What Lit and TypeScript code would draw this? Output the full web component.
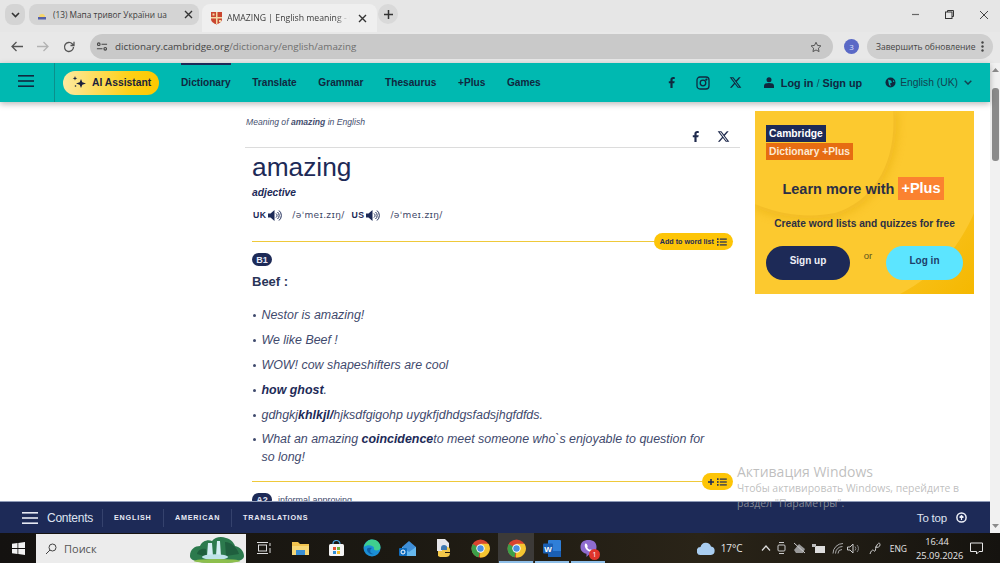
import { LitElement, html, css } from "lit";
import { customElement } from "lit/decorators.js";

const xLogo = (s: number, c = "#1f2a4d") => html`<svg width=${s} height=${s} viewBox="0 0 24 24" fill=${c}><path d="M18.244 2.25h3.308l-7.227 8.26 8.502 11.24H16.17l-5.214-6.817L4.99 21.75H1.68l7.73-8.835L1.254 2.25H8.08l4.713 6.231zm-1.161 17.52h1.833L7.084 4.126H5.117z"/></svg>`;
const fLogo = (s: number, c = "#1f2a4d") => html`<svg width=${s} height=${s} viewBox="0 0 24 24" fill=${c}><path d="M14 13.5h3l1-4h-4v-2c0-1.03 0-2 2-2h2V2.14C17.67 2.1 16.3 2 15 2c-2.7 0-5 1.66-5 4.7v2.8H7v4h3V22h4z"/></svg>`;
const listIcon = html`<svg width="10" height="8" viewBox="0 0 10 8" fill="#1d2a57"><rect x="0" y="0.3" width="1.600" height="1.600"/><rect x="0" y="3.200" width="1.600" height="1.600"/><rect x="0" y="6.100" width="1.600" height="1.600"/><rect x="2.800" y="0.500" width="7" height="1.200"/><rect x="2.800" y="3.400" width="7" height="1.200"/><rect x="2.800" y="6.300" width="7" height="1.200"/></svg>`;
const speaker = html`<svg width="15" height="13" viewBox="0 0 15 13" fill="none" stroke="#1d2a57"><path d="M0 4.500h2.500L6.500 1v11L2.500 8.500H0z" fill="#1d2a57" stroke="none"/><path d="M8 4.500a2.500 2.500 0 0 1 0 4M9.500 3a4.500 4.500 0 0 1 0 7M11 1.500a6.500 6.500 0 0 1 0 10" stroke-width="1"/></svg>`;
const burger = (c: string) => html`<svg width="16" height="12" viewBox="0 0 16 12" fill=${c}><rect width="16" height="1.600" y="0"/><rect width="16" height="1.600" y="5.200"/><rect width="16" height="1.600" y="10.400"/></svg>`;
const chrome = html`<svg width="19" height="19" viewBox="0 0 20 20"><circle cx="10" cy="10" r="9.500" fill="#d9442f"/><path d="M10 10 1.800 5.200A9.500 9.500 0 0 0 8 19.300z" fill="#3c9f49"/><path d="M10 5h8.400a9.500 9.500 0 0 1-9 14.500z" fill="#f4c531"/><circle cx="10" cy="10" r="4.400" fill="#fff"/><circle cx="10" cy="10" r="3.400" fill="#4a8fe0"/></svg>`;

@customElement("app-root")
export class AppRoot extends LitElement {
  static styles = css`
    :host { display: flex; flex-direction: column; width: 1000px; height: 563px; overflow: hidden; position: relative; font-family: "Liberation Sans", Arial, sans-serif; color: #1d2a57; background: #fff; }
    svg { display: block; flex: none; }

    .tabs { height: 32px; flex: none; background: #e6e6e6; display: flex; align-items: flex-start; padding-top: 4px; box-sizing: border-box; font-family: "Open Sans", sans-serif; color: #3c3c3c; }
    .drop { width: 20px; height: 21px; margin-left: 5px; border-radius: 8px; background: #d4d4d4; display: flex; align-items: center; justify-content: center; }
    .tab { height: 21px; display: flex; align-items: center; box-sizing: border-box; font-size: 8.300px; white-space: nowrap; border-radius: 8px; }
    .tab.t1 { width: 170px; margin-left: 4px; background: #d4d4d4; padding-left: 7px; }
    .tab.t2 { width: 175px; margin-left: 3px; background: #efefef; padding-left: 8px; height: 28px; border-radius: 8px 8px 0 0; font-size: 8.700px; }
    .tab .lbl { margin-left: 5px; width: 118px; overflow: hidden; flex: none; }
    .tab.t2 .lbl { margin-left: 4px; width: 123px; -webkit-mask-image: linear-gradient(90deg,#000 88%,transparent); mask-image: linear-gradient(90deg,#000 88%,transparent); }
    .tab .x { margin-left: 13px; }
    .tab.t2 .x { margin-left: 8px; }
    .plus { width: 20px; height: 20px; border-radius: 50%; margin-left: 1px; background: #d9d9d9; display: flex; align-items: center; justify-content: center; }
    .win { margin-left: auto; display: flex; align-items: center; height: 21px; padding-right: 11px; gap: 25px; }

    .tool { height: 31px; flex: none; background: #e8e8e8; display: flex; align-items: center; padding-bottom: 2px; box-sizing: border-box; font-family: "Open Sans", sans-serif; }
    .nav { display: flex; align-items: center; padding-left: 11px; gap: 14px; width: 90px; box-sizing: border-box; }
    .omni { width: 743px; height: 25px; background: #c9c9c9; border-radius: 13px; display: flex; align-items: center; box-sizing: border-box; padding-left: 6px; padding-right: 11px; font-size: 9.800px; color: #444; }
    .omni .url { margin-left: 7px; white-space: nowrap; }
    .omni .url span { color: #6e6e6e; }
    .omni svg:last-child { margin-left: auto; }
    .prof { width: 15px; height: 15px; border-radius: 50%; background: #5a69c6; color: #dfe3ff; font-size: 8px; display: flex; align-items: center; justify-content: center; margin-left: 11px; }
    .upd { width: 126px; height: 25px; margin-left: 8px; background: #cfcfcf; border-radius: 13px; display: flex; align-items: center; padding-left: 9px; box-sizing: border-box; font-size: 8.500px; color: #444; white-space: nowrap; gap: 6px; }

    .page { flex: 1; min-height: 0; display: flex; }
    .view { flex: 1; min-width: 0; display: flex; flex-direction: column; }
    .sb { width: 10px; flex: none; background: #f1f1f1; display: flex; flex-direction: column; align-items: center; padding-top: 5px; box-sizing: border-box; }
    .thumb { width: 7px; height: 73px; border-radius: 3px; background: #8b8b8b; margin-top: 16px; }
    .sb .dn { margin-top: auto; margin-bottom: 5px; }

    .hdr { height: 39px; flex: none; background: #00b9b1; display: flex; align-items: center; box-shadow: 0 2px 6px rgba(0,0,0,.28); position: relative; z-index: 1; color: #10283f; font-weight: 700; font-size: 10.150px; white-space: nowrap; }
    .hb { width: 55px; height: 100%; box-sizing: border-box; border-right: 1px solid #0b8f8c; display: flex; align-items: center; padding-left: 18px; flex: none; padding-bottom: 3px; }
    .ai { margin-left: 8px; width: 96px; height: 24px; border-radius: 12px; background: linear-gradient(90deg,#fde9a0,#fdd016 70%,#fdc800); display: flex; align-items: center; padding-left: 9px; box-sizing: border-box; gap: 5px; font-size: 10.300px; color: #1a1f3c; flex: none; }
    .menu { display: flex; align-items: center; height: 100%; margin-left: 22px; }
    .menu a { display: flex; align-items: center; height: 100%; box-sizing: border-box; margin-right: 21.700px; border-top: 2px solid transparent; border-bottom: 2px solid transparent; }
    .menu a.on { border-top-color: #1d2a57; }
    .hsoc { display: flex; align-items: center; margin-left: auto; }
    .hsoc .ig { margin-left: 18px; }
    .hsoc .xl { margin-left: 19px; }
    .hsoc .us { margin-left: 22px; }
    .hsoc .gl { margin-left: 23px; }
    .hsoc .ch { margin: 0 18px 0 6px; }
    .login { font-size: 10.850px; color: #10283f; margin-left: 7px; }
    .login span { font-weight: 400; opacity: .7; }
    .lang { font-weight: 400; font-size: 10.300px; color: #13414f; margin-left: 4px; }

    .scroll { flex: 1; min-height: 0; overflow: hidden; display: flex; padding-left: 245px; }
    .main { width: 495px; flex: none; }
    .crumb { font-size: 8.600px; font-style: italic; color: #46506f; margin: 15px 0 0 1px; line-height: 10px; white-space: nowrap; }
    .share { display: flex; justify-content: flex-end; gap: 15px; padding-right: 10px; height: 16px; margin-top: 1px; align-items: center; }
    .hr { height: 1px; background: #dcdcdc; margin-top: 3px; }
    .entry { padding-left: 7px; width: 481px; }
    h1 { margin: 2px 0 0; font-weight: 400; font-size: 26.300px; line-height: 34px; color: #1d2a57; }
    .pos { font-size: 10.300px; font-weight: 700; font-style: italic; line-height: 12px; margin-top: 3px; color: #1d2a57; }
    .pron { display: flex; align-items: center; height: 14px; margin-top: 9px; font-size: 10px; color: #3d4666; white-space: nowrap; }
    .pron b { font-size: 8.700px; letter-spacing: .4px; margin-left: 1px; margin-right: 2px; color: #1d2a57; }
    .pron .ipa { margin: 0 6px 0 9px; font-family: "DejaVu Sans", sans-serif; font-size: 9px; letter-spacing: .35px; }
    .rule { display: flex; align-items: center; }
    .rule i { flex: 1; height: 1px; background: #efc93a; }
    .rule .pill { height: 17px; border-radius: 9px; background: #fdc507; display: flex; align-items: center; font-size: 7.200px; font-weight: 700; color: #1d2a57; padding: 0 6px; gap: 3px; box-sizing: border-box; white-space: nowrap; }
    .r1 { margin-top: 11px; }
    .lvl { width: 20px; height: 13px; border-radius: 7px; background: #1d2a57; color: #e5e8f5; font-size: 9px; font-weight: 700; display: flex; align-items: center; justify-content: center; flex: none; }
    .r1lvl { margin-top: 3px; }
    h2 { margin: 8px 0 0; font-size: 13px; font-weight: 700; line-height: 16px; color: #2a3558; }
    ul { list-style: none; margin: 16px 0 0; padding: 0; width: 458px; font-size: 12.420px; font-style: italic; color: #3f4a6d; }
    li { position: relative; padding-left: 9.500px; line-height: 18px; margin-bottom: 6.900px; }
    li::before { content: ""; position: absolute; left: 1px; top: 8px; width: 3px; height: 3px; border-radius: 50%; background: #3f4a6d; }
    li b { color: #1d2a57; }
    .r2 { margin-top: 6px; }
    .a2 { display: flex; align-items: center; margin-top: 3px; font-size: 9px; color: #3f4a6d; gap: 6px; }

    .ad { width: 219px; height: 183px; margin: 9px 0 0 15px; flex: none; background: #fcc92f; position: relative; overflow: hidden; display: flex; flex-direction: column; box-sizing: border-box; padding: 14px 11px 0; }
    .ad > svg.bg { position: absolute; inset: 0; }
    .ad > *:not(.bg) { position: relative; }
    .brand { display: flex; flex-direction: column; align-items: flex-start; font-size: 10.300px; font-weight: 700; color: #fff; line-height: 17px; gap: 1px; }
    .brand span { padding: 0 3px; height: 17px; }
    .brand .a { background: #1d2a57; }
    .brand .b { background: #e66c12; color: #fde9d2; }
    .lm { display: flex; align-items: center; justify-content: center; gap: 4px; margin-top: 17px; font-size: 14.500px; font-weight: 700; color: #2b2f45; height: 23px; padding-right: 3px; white-space: nowrap; }
    .lm span { background: #fb8230; color: #fff; height: 23px; line-height: 23px; padding: 0 3px; }
    .cw { font-size: 10.200px; font-weight: 700; text-align: center; margin-top: 17px; line-height: 14px; color: #2b2f45; white-space: nowrap; }
    .btns { display: flex; margin-top: 15px; align-items: flex-start; }
    .btn { height: 34px; border-radius: 17px; display: flex; align-items: center; justify-content: center; font-size: 10px; font-weight: 700; padding-bottom: 5px; box-sizing: border-box; }
    .su { width: 84px; background: #1d2a57; color: #eef0f8; }
    .or { width: 36px; text-align: center; font-size: 9.500px; color: #5b5220; line-height: 20px; }
    .li { width: 77px; background: #5ce5ff; color: #1d3f6a; }

    .bot { height: 32px; flex: none; background: #1d2a57; border-top: 1px solid #8f9bb8; box-sizing: border-box; display: flex; align-items: center; color: #dfe4f2; white-space: nowrap; position: relative; z-index: 1; }
    .bot .h { margin-left: 22px; }
    .bot .c { font-size: 12px; margin-left: 9px; letter-spacing: -.25px; width: 55px; box-sizing: border-box; }
    .bot .sec { font-size: 7.200px; font-weight: 700; letter-spacing: .8px; border-left: 1px solid #35426d; height: 18px; display: flex; align-items: center; padding-left: 11px; box-sizing: border-box; color: #e8ebf5; }
    .bot .s1 { width: 61px; }
    .bot .s2 { width: 68px; }
    .totop { margin-left: auto; margin-right: 23px; display: flex; align-items: center; gap: 9px; font-size: 11.500px; letter-spacing: -.2px; }

    .task { height: 30px; flex: none; background: linear-gradient(90deg,#141210,#1c1912 40%,#2a2418 70%,#15130f); display: flex; align-items: center; color: #e6e6e6; font-family: "Open Sans", sans-serif; position: relative; }
    .start { width: 36px; display: flex; justify-content: center; flex: none; }
    .search { width: 210px; height: 29px; margin-top: 1px; background: #ececec; display: flex; align-items: center; padding-left: 9px; box-sizing: border-box; font-size: 11px; color: #555; gap: 7px; flex: none; overflow: hidden; }
    .search svg:last-child { margin-left: auto; margin-right: 1px; }
    .icons { display: flex; height: 100%; }
    .ic { width: 36px; height: 100%; display: flex; align-items: center; justify-content: center; box-sizing: border-box; position: relative; }
    .ic.run::after { content: ""; position: absolute; left: 1px; right: 1px; bottom: 0; height: 2px; background: #8fbfe8; }
    .ic.act { background: #3c3a38; }
    .badge { position: absolute; left: 19px; top: 16px; width: 11px; height: 11px; border-radius: 50%; background: #e0352b; color: #fff; font-size: 7px; line-height: 11px; text-align: center; }
    .tray { margin-left: auto; display: flex; align-items: center; height: 100%; padding-right: 17px; gap: 6.500px; }
    .tmp { font-size: 10px; margin-left: -0.500px; margin-right: 11.500px; }
    .tray .tight { margin-left: -3.500px; }
    .tray .wide { margin-left: 3.500px; }
    .eng { font-size: 8.500px; margin: 0 2.500px; }
    .clock { font-size: 9.300px; text-align: center; line-height: 14px; margin-right: 5.500px; width: 42px; white-space: nowrap; padding-top: 1px; }

    .wm { position: absolute; left: 737px; top: 463px; z-index: 5; color: rgba(170,170,170,.75); pointer-events: none; white-space: nowrap; font-family: "Open Sans", sans-serif; }
    .wm .a { font-size: 14px; line-height: 17px; }
    .wm .b { font-size: 10.450px; line-height: 15px; margin-top: 1px; }
  `;

  render() {
    const gx = (d = "#444") => html`<svg width="9" height="9" viewBox="0 0 9 9" stroke=${d} stroke-width="1.400"><path d="M1 1l7 7M8 1L1 8"/></svg>`;
    return html`
      <div class="tabs">
        <div class="drop"><svg width="9" height="6" viewBox="0 0 9 6" fill="none" stroke="#333" stroke-width="1.600"><path d="M1 1l3.500 3.500L8 1"/></svg></div>
        <div class="tab t1">
          <svg width="12" height="12" viewBox="0 0 12 12"><path d="M3 8a3 3 0 0 1 6 0z" fill="#f6d66a"/><rect x="2" y="8" width="8" height="2.500" fill="#5560a8"/></svg>
          <span class="lbl">(13) Мапа тривог України ua</span>
          <span class="x">${gx("#333")}</span>
        </div>
        <div class="tab t2">
          <svg width="13" height="14" viewBox="0 0 13 14"><path d="M1 1h11v7c0 3-3 4.500-5.500 5.500C4 12.500 1 11 1 8z" fill="#c9452f"/><path d="M6 1h1.500v12H6zM1 6h11v1.500H1z" fill="#f3d9a8"/><rect x="2.500" y="2.500" width="2" height="2" fill="#f3d9a8"/><rect x="9" y="9" width="2" height="2" fill="#f3d9a8"/></svg>
          <span class="lbl">AMAZING | English meaning - Cambridge</span>
          <span class="x">${gx("#333")}</span>
        </div>
        <div class="plus"><svg width="9" height="9" viewBox="0 0 9 9" stroke="#333" stroke-width="1.500"><path d="M4.500 0v9M0 4.500h9"/></svg></div>
        <div class="win">
          <svg width="9" height="9" viewBox="0 0 9 9" stroke="#666" stroke-width="1.200"><path d="M1 4.500h7"/></svg>
          <svg width="9" height="9" viewBox="0 0 9 9" fill="none" stroke="#333" stroke-width="1"><rect x=".5" y="2" width="6.500" height="6.500"/><path d="M2.500 2V.5h6v6H7"/></svg>
          <svg width="10" height="10" viewBox="0 0 10 10" stroke="#444" stroke-width="1"><path d="M1 1l8 8M9 1l-8 8"/></svg>
        </div>
      </div>

      <div class="tool">
        <div class="nav">
          <svg width="12" height="11" viewBox="0 0 12 11" fill="none" stroke="#555" stroke-width="1.300"><path d="M12 5.500H1.500M5.500 1l-4.500 4.500 4.500 4.500"/></svg>
          <svg width="12" height="11" viewBox="0 0 12 11" fill="none" stroke="#b2b2b2" stroke-width="1.300"><path d="M0 5.500h10.500M6.500 1l4.500 4.500-4.500 4.500"/></svg>
          <svg width="12" height="12" viewBox="0 0 12 12" fill="none" stroke="#555" stroke-width="1.300"><path d="M10.500 6a4.500 4.500 0 1 1-1.300-3.200L11 4.500M11 .8v3.700H7.500"/></svg>
        </div>
        <div class="omni">
          <svg width="12" height="11" viewBox="0 0 13 11" fill="none" stroke="#444" stroke-width="1.200"><circle cx="3" cy="3" r="1.400"/><path d="M6 3h6M1 8h6"/><circle cx="10" cy="8" r="1.400"/></svg>
          <span class="url">dictionary.cambridge.org<span>/dictionary/english/amazing</span></span>
          <svg width="12" height="12" viewBox="0 0 24 24" fill="none" stroke="#555" stroke-width="2"><path d="M12 2.500l3 6.300 6.800.9-5 4.700 1.300 6.800-6.100-3.300-6.100 3.300 1.300-6.800-5-4.700 6.800-.9z"/></svg>
        </div>
        <div class="prof">3</div>
        <div class="upd">Завершить обновление
          <svg width="3" height="11" viewBox="0 0 3 11" fill="#444"><circle cx="1.500" cy="1.500" r="1.200"/><circle cx="1.500" cy="5.500" r="1.200"/><circle cx="1.500" cy="9.500" r="1.200"/></svg>
        </div>
      </div>

      <div class="page">
        <div class="view">
          <div class="hdr">
            <div class="hb">${burger("#10283f")}</div>
            <div class="ai">
              <svg width="15" height="13" viewBox="0 0 15 13" fill="#1a1f3c"><path d="M9 3l1.300 3.200L14 7.500l-3.700 1.300L9 12 7.700 8.800 4 7.500l3.700-1.300z"/><path d="M3 0l.6 1.700 1.700.6-1.700.6L3 4.600l-.6-1.700L.7 2.300l1.700-.6z"/><circle cx="3.500" cy="10" r=".8"/></svg>
              AI Assistant
            </div>
            <div class="menu">
              <a class="on">Dictionary</a><a>Translate</a><a>Grammar</a><a>Thesaurus</a><a>+Plus</a><a>Games</a>
            </div>
            <div class="hsoc">
              ${fLogo(13, "#10283f")}
              <svg class="ig" width="14" height="14" viewBox="0 0 14 14" fill="none" stroke="#10283f" stroke-width="1.300"><rect x="1" y="1" width="12" height="12" rx="3"/><circle cx="7" cy="7" r="2.800"/><circle cx="10.400" cy="3.600" r=".5" fill="#10283f"/></svg>
              <span class="xl">${xLogo(13, "#10283f")}</span>
              <svg class="us" width="10" height="11" viewBox="0 0 10 11" fill="#10283f"><circle cx="5" cy="2.800" r="2.500"/><path d="M0 11V8.500C0 6.800 2 6 5 6s5 .8 5 2.500V11z"/></svg>
              <span class="login">Log in <span>/</span> Sign up</span>
              <svg class="gl" width="11" height="11" viewBox="0 0 11 11"><circle cx="5.500" cy="5.500" r="5" fill="#10283f"/><path d="M3 2.500l3 1 1 2-2 1 1 3-2-1.500zM8 3l1.500 1.500L8 5z" fill="#00b9b1"/></svg>
              <span class="lang">English (UK)</span>
              <svg class="ch" width="8" height="5" viewBox="0 0 8 5" fill="none" stroke="#13414f" stroke-width="1.500"><path d="M.7.7L4 4 7.300.7"/></svg>
            </div>
          </div>

          <div class="scroll">
            <div class="main">
              <div class="crumb">Meaning of <b>amazing</b> in English</div>
              <div class="share">${fLogo(13)}${xLogo(13)}</div>
              <div class="hr"></div>
              <div class="entry">
                <h1>amazing</h1>
                <div class="pos">adjective</div>
                <div class="pron">
                  <b>UK</b>${speaker}<span class="ipa">/əˈmeɪ.zɪŋ/</span><b>US</b>${speaker}<span class="ipa">/əˈmeɪ.zɪŋ/</span>
                </div>
                <div class="rule r1"><i></i><div class="pill">Add to word list ${listIcon}</div></div>
                <div class="lvl r1lvl">B1</div>
                <h2>Beef :</h2>
                <ul>
                  <li>Nestor is amazing!</li>
                  <li>We like Beef !</li>
                  <li>WOW! cow shapeshifters are cool</li>
                  <li><b>how ghost</b>.</li>
                  <li>gdhgkj<b>khlkjl/</b>hjksdfgigohp uygkfjdhdgsfadsjhgfdfds.</li>
                  <li>What an amazing <b>coincidence</b>to meet someone who\`s enjoyable to question for so long!</li>
                </ul>
                <div class="rule r2"><i></i><div class="pill"><svg width="6" height="6" viewBox="0 0 7 7" stroke="#1d2a57" stroke-width="1.800"><path d="M3.500 0v7M0 3.500h7"/></svg>${listIcon}</div></div>
                <div class="a2"><div class="lvl">A2</div>informal approving</div>
              </div>
            </div>
            <div class="ad">
              <svg class="bg" width="219" height="183" viewBox="0 0 219 183">
                <defs>
                  <linearGradient id="g2" x1="0" y1="0" x2="1" y2="1"><stop offset="0" stop-color="#fbc52a"/><stop offset="1" stop-color="#f5b800"/></linearGradient>
                  <filter id="bl" x="-20%" y="-20%" width="140%" height="140%"><feGaussianBlur stdDeviation="5"/></filter>
                  <clipPath id="out"><path d="M138 0C142 50 120 90 80 102C50 108 20 102 0 93V183H219V0z"/></clipPath>
                </defs>
                <g clip-path="url(#out)"><path d="M138 0C142 50 120 90 80 102C50 108 20 102 0 93" fill="none" stroke="#e0a510" stroke-width="7" opacity=".55" filter="url(#bl)"/></g>
                <path d="M219 102C205 135 180 165 145 183H219z" fill="url(#g2)"/>
              </svg>
              <div class="brand"><span class="a">Cambridge</span><span class="b">Dictionary +Plus</span></div>
              <div class="lm">Learn more with <span>+Plus</span></div>
              <div class="cw">Create word lists and quizzes for free</div>
              <div class="btns">
                <div class="btn su">Sign up</div>
                <div class="or">or</div>
                <div class="btn li">Log in</div>
              </div>
            </div>
          </div>

          <div class="bot">
            <span class="h">${burger("#e6e9f4")}</span>
            <span class="c">Contents</span>
            <span class="sec s1">ENGLISH</span>
            <span class="sec s2">AMERICAN</span>
            <span class="sec">TRANSLATIONS</span>
            <span class="totop">To top
              <svg width="11" height="11" viewBox="0 0 11 11" fill="none" stroke="#eef0f8" stroke-width="1.500"><circle cx="5.500" cy="5.500" r="4.600"/><path d="M3.500 5.500l2-2 2 2M5.500 3.800V8" stroke-width="1.200"/></svg>
            </span>
          </div>
        </div>
        <div class="sb">
          <svg width="7" height="4" viewBox="0 0 7 4" fill="#8b8b8b"><path d="M3.500 0L7 4H0z"/></svg>
          <div class="thumb"></div>
          <svg class="dn" width="7" height="4" viewBox="0 0 7 4" fill="#8b8b8b"><path d="M3.500 4L7 0H0z"/></svg>
        </div>
      </div>

      <div class="task">
        <div class="start"><svg width="13" height="13" viewBox="0 0 13 13" fill="#f2f2f2"><path d="M0 1.800L5.500 1v5H0zM6.300.9L13 0v6H6.300zM0 7h5.500v5L0 11.200zM6.300 7H13v6l-6.700-.9z"/></svg></div>
        <div class="search">
          <svg width="12" height="12" viewBox="0 0 12 12" fill="none" stroke="#444" stroke-width="1"><circle cx="7.500" cy="4.500" r="3.500"/><path d="M5 7L1 11"/></svg>
          Поиск
          <svg width="56" height="29" viewBox="0 0 56 29"><path d="M1 22C1 15 6 12 11 12c2-5 8-7 12-5 3-4 9-5 14-3 5 1 8 5 9 8 5 1 9 5 9 10 0 4-6 7-27 7S1 26 1 22z" fill="#2c7a4d"/><path d="M8 20c1-5 6-6 9-5l1 8zM36 8c6 0 12 5 14 12l-13 2z" fill="#1f5f3e"/><path d="M19 9h4l1 13h-6zM28 7h3l1 15h-5z" fill="#d5edf3"/><ellipse cx="26" cy="23" rx="13" ry="2.800" fill="#bfe3ea"/><ellipse cx="28" cy="27" rx="23" ry="2" fill="#8dbf4d"/></svg>
        </div>
        <div class="icons">
          <div class="ic"><svg width="14" height="12" viewBox="0 0 14 12" fill="none" stroke="#ddd"><rect x="1.500" y="3" width="8" height="6"/><path d="M0 .5h11M0 11.500h11M13 1v3M13 6v5"/></svg></div>
          <div class="ic"><svg width="17" height="15" viewBox="0 0 17 15"><path d="M0 1h6l2 2h9v11H0z" fill="#f1c34f"/><rect x="0" y="5" width="17" height="9" fill="#f7d878"/><rect x="4" y="9" width="9" height="5" fill="#3a8fd4"/></svg></div>
          <div class="ic"><svg width="17" height="17" viewBox="0 0 17 17"><path d="M5 4a3.500 3.500 0 0 1 7 0" fill="none" stroke="#4aa3df" stroke-width="1.200"/><rect x="1" y="4" width="15" height="12" rx="1.500" fill="#f4f4f4"/><rect x="5" y="7" width="3" height="3" fill="#e2502f"/><rect x="9" y="7" width="3" height="3" fill="#6cb33f"/><rect x="5" y="11" width="3" height="3" fill="#2f8fd8"/><rect x="9" y="11" width="3" height="3" fill="#f6bd2b"/></svg></div>
          <div class="ic"><svg width="18" height="18" viewBox="0 0 18 18"><circle cx="9" cy="9" r="8.500" fill="#1b8fd6"/><path d="M1 8C2 3 6 .5 9 .5c5 0 8.500 3.500 8.500 8 0 2-2 3-4 3-2.500 0-3-1.500-2.500-3C10 6 4 5 1 8z" fill="#3fcf8e"/><path d="M4 10c0 4 4 6 7 5-4 0-5-4-2-6-2-.5-5 0-5 1z" fill="#0f5fa8"/></svg></div>
          <div class="ic"><svg width="18" height="17" viewBox="0 0 18 17"><path d="M3 7l7-6 7 6v9H3z" fill="#3f8fd8"/><path d="M3 7l7 5 7-5v9H3z" fill="#66b8ee"/><rect x="0" y="8" width="8" height="8" rx="1" fill="#0f6cbd"/><circle cx="4" cy="12" r="2" fill="none" stroke="#fff"/></svg></div>
          <div class="ic"><svg width="17" height="19" viewBox="0 0 17 19"><path d="M1 0h8l4 4v8H1z" fill="#e6e6ea"/><path d="M2 17v-5h4V8h5c2 0 3 1 3 3v2H9v1h5c0 3-2 4-4 4H4z" fill="#f3c84a"/><path d="M5 9c0-2 1-3 3-3s3 1 3 2v3H5z" fill="#3f78b0"/></svg></div>
          <div class="ic">${chrome}</div>
          <div class="ic act run">${chrome}</div>
          <div class="ic run"><svg width="18" height="17" viewBox="0 0 18 17"><rect x="5" y="0" width="13" height="17" rx="1" fill="#2f7fd8"/><rect x="5" y="11" width="13" height="6" fill="#1a5fb4"/><rect x="0" y="3.500" width="10" height="10" rx="1" fill="#1a5fb4"/><text x="5" y="11.500" text-anchor="middle" font-size="8" font-weight="700" fill="#fff" font-family="Liberation Sans">W</text></svg></div>
          <div class="ic run"><svg width="17" height="18" viewBox="0 0 17 18"><path d="M8.500 1c5 0 8 2.500 8 7s-3 7-7 7l-3 3v-3.200C3 14 .5 12 .5 8c0-4.500 3-7 8-7z" fill="#8e6ccf"/><path d="M5 5c1-1 2 0 2.500 1.500S7 8 7.500 9s2 2 3 1.500 2 1 1 1.800c-3 1.500-8-3.500-6.500-7.300z" fill="#fff"/></svg><span class="badge">1</span></div>
        </div>
        <div class="tray">
          <svg width="18" height="13" viewBox="0 0 18 13"><path d="M4 13a4 4 0 0 1-.5-8A5.500 5.500 0 0 1 14 4.500 4.300 4.300 0 0 1 14 13z" fill="#a9cdf0"/></svg>
          <span class="tmp">17°C</span>
          <svg width="10" height="6" viewBox="0 0 10 6" fill="none" stroke="#ddd" stroke-width="1.200"><path d="M1 5.500L5 1l4 4.500"/></svg>
          <svg width="9" height="14" viewBox="0 0 9 14" fill="none" stroke="#ccc"><rect x="1" y="4" width="7" height="6" rx="1"/><path d="M2 1.500h5M2 12.500h5"/></svg>
          <svg width="13" height="12" viewBox="0 0 13 12"><path d="M1 8l5-6 6 5-2 4H3z" fill="#999"/><path d="M1 1l11 10" stroke="#ccc"/></svg>
          <svg width="13" height="9" viewBox="0 0 13 9"><rect x="3" y="2" width="10" height="7" fill="#ddd"/><rect x="0" y="0" width="4" height="3" fill="#bbb"/></svg>
          <svg width="12" height="11" viewBox="0 0 12 11" fill="none" stroke="#aaa"><path d="M1 10.500a10 10 0 0 1 10-10M3.500 10.500a7 7 0 0 1 7-7M6 10.500a4 4 0 0 1 4-4"/></svg>
          <svg class="tight" width="12" height="11" viewBox="0 0 12 11" fill="none" stroke="#ccc"><path d="M0.500 4H3l3-3v9L3 7H.5z"/><path d="M8 3.500a3 3 0 0 1 0 4M10 2a5 5 0 0 1 0 7" stroke="#888"/></svg>
          <svg class="wide" width="12" height="13" viewBox="0 0 12 13" fill="none" stroke="#ccc"><path d="M1 12c1-3 2-4 3-4s1 2 2 1 0-3 2-6 3-2 3 0-3 3-5 2"/></svg>
          <span class="eng">ENG</span>
          <div class="clock">16:44<br />25.09.2026</div>
          <svg width="13" height="13" viewBox="0 0 13 13" fill="none" stroke="#e6e6e6"><path d="M.5 1h12v8.500H9L6.500 12V9.500h-6z"/></svg>
        </div>
      </div>

      <div class="wm">
        <div class="a">Активация Windows</div>
        <div class="b">Чтобы активировать Windows, перейдите в<br />раздел "Параметры".</div>
      </div>
    `;
  }
}
